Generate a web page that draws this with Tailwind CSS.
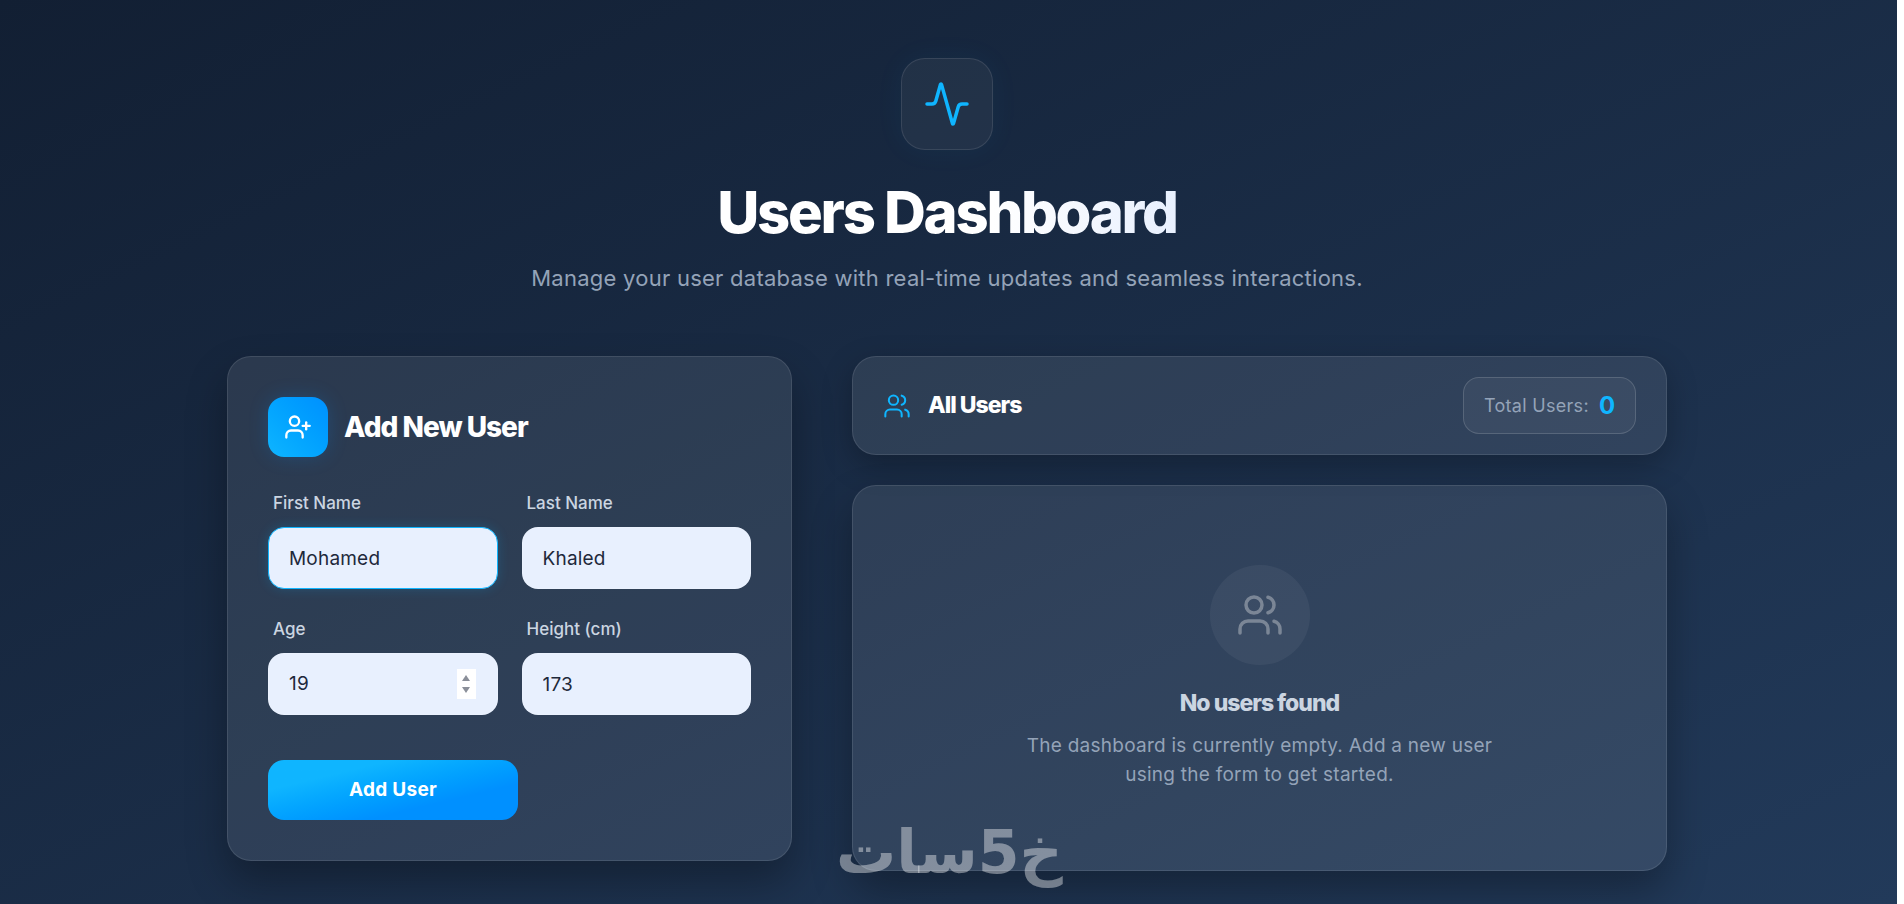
<!DOCTYPE html>
<html lang="en">
  <head>
    <meta charset="UTF-8" />
    <meta name="viewport" content="width=device-width, initial-scale=1.0" />
    <title>Users Dashboard</title>
    <script src="https://cdn.jsdelivr.net/npm/@tailwindcss/browser@4"></script>
  </head>
  <body class="flex h-[904px] overflow-hidden bg-white font-['Inter',sans-serif]">
    <div class="relative flex-1 bg-linear-to-br from-[#121f33] to-[#223a5a] pt-[58px]">
      <!-- Header -->
      <header class="flex flex-col items-center pr-[3px]">
        <div class="flex h-[92px] w-[92px] items-center justify-center rounded-3xl border border-white/10 bg-white/5 shadow-[0_0_30px_rgba(15,181,255,0.05)]">
          <svg class="h-12 w-12 text-[#0fb5ff]" xmlns="http://www.w3.org/2000/svg" fill="none" viewBox="0 0 24 24" stroke="currentColor" stroke-width="1.75" stroke-linecap="round" stroke-linejoin="round">
            <path d="M22 12h-2.48a2 2 0 0 0-1.93 1.46l-2.35 8.36a.25.25 0 0 1-.48 0L9.24 2.18a.25.25 0 0 0-.48 0l-2.35 8.36A2 2 0 0 1 4.49 12H2" />
          </svg>
        </div>
        <h1 class="mt-[26px] bg-linear-to-r from-white from-60% to-[#e8f0fe] bg-clip-text text-[58px] leading-[72px] font-extrabold tracking-[-2.3px] text-transparent">Users Dashboard</h1>
        <p class="mt-[15px] text-[22px] leading-[30px] tracking-[0.25px] text-[#94a3b8]">Manage your user database with real-time updates and seamless interactions.</p>
      </header>

      <main class="mt-[63px] ml-[227px] grid w-[1440px] grid-cols-[565px_815px] gap-[60px]">
        <!-- Add user form -->
        <section class="h-[505px] rounded-3xl border border-white/10 bg-white/[0.09] p-10 shadow-[0_20px_40px_rgba(0,0,0,0.3)]">
          <div class="flex items-center gap-4">
            <div class="flex h-[60px] w-[60px] items-center justify-center rounded-2xl bg-linear-to-tr from-[#0fb5ff] to-[#0090ff] shadow-[0_0_20px_rgba(15,144,255,0.2)]">
              <svg class="h-7 w-7 text-white" xmlns="http://www.w3.org/2000/svg" fill="none" viewBox="0 0 24 24" stroke="currentColor" stroke-width="2" stroke-linecap="round" stroke-linejoin="round">
                <path d="M16 21v-2a4 4 0 0 0-4-4H6a4 4 0 0 0-4 4v2" />
                <circle cx="9" cy="7" r="4" />
                <path d="M19 8v6" />
                <path d="M22 11h-6" />
              </svg>
            </div>
            <h2 class="text-[28px] font-extrabold tracking-[-1px] text-white">Add New User</h2>
          </div>
          <form class="mt-[34px] grid grid-cols-2 gap-x-6 gap-y-[28px]">
            <div>
              <label class="block pl-[5px] text-[17px] leading-6 font-medium text-[#cbd5e1]">First Name</label>
              <input type="text" value="Mohamed" class="mt-3 h-[62px] w-full rounded-2xl border border-[#0fb5ff] bg-[#e8f0fe] px-5 text-[19px] tracking-[0.2px] text-[#1e293b] shadow-[0_0_12px_rgba(15,181,255,0.2)] outline-none" />
            </div>
            <div>
              <label class="block pl-[5px] text-[17px] leading-6 font-medium text-[#cbd5e1]">Last Name</label>
              <input type="text" value="Khaled" class="mt-3 h-[62px] w-full rounded-2xl border border-white/15 bg-[#e8f0fe] px-5 text-[19px] tracking-[0.2px] text-[#1e293b] outline-none" />
            </div>
            <div>
              <label class="block pl-[5px] text-[17px] leading-6 font-medium text-[#cbd5e1]">Age</label>
              <div class="relative mt-3 flex h-[62px] w-full items-center rounded-2xl border border-white/15 bg-[#e8f0fe] px-5 text-[19px] tracking-[0.2px] text-[#1e293b]">
                19
                <span class="absolute top-[15px] right-[21px] flex h-[30px] w-[19px] flex-col items-center justify-center gap-[6px] bg-white">
                  <svg class="h-[6px] w-[8px] text-[#8a8f99]" viewBox="0 0 8 6" fill="currentColor"><path d="M4 0 8 6H0z" /></svg>
                  <svg class="h-[6px] w-[8px] text-[#8a8f99]" viewBox="0 0 8 6" fill="currentColor"><path d="M0 0h8L4 6z" /></svg>
                </span>
              </div>
            </div>
            <div>
              <label class="block pl-[5px] text-[17px] leading-6 font-medium text-[#cbd5e1]">Height (cm)</label>
              <input type="text" value="173" class="mt-3 h-[62px] w-full rounded-2xl border border-white/15 bg-[#e8f0fe] px-5 text-[19px] tracking-[0.2px] text-[#1e293b] outline-none" />
            </div>
          </form>
          <button class="mt-[45px] h-[60px] w-[250px] rounded-2xl bg-linear-to-br from-[#0fb5ff] from-25% to-[#0090ff] to-70% text-[19px] font-bold tracking-[0.3px] text-white">Add User</button>
        </section>

        <!-- Users list -->
        <section class="flex flex-col gap-[30px]">
          <div class="flex h-[99px] items-center justify-between rounded-3xl border border-white/10 bg-white/[0.09] pr-[30px] pl-[30px] shadow-[0_10px_30px_rgba(0,0,0,0.25)]">
            <div class="flex items-center gap-[17px]">
              <svg class="h-7 w-7 text-[#0fb5ff]" xmlns="http://www.w3.org/2000/svg" fill="none" viewBox="0 0 24 24" stroke="currentColor" stroke-width="1.75" stroke-linecap="round" stroke-linejoin="round">
                <path d="M16 21v-2a4 4 0 0 0-4-4H6a4 4 0 0 0-4 4v2" />
                <circle cx="9" cy="7" r="4" />
                <path d="M22 21v-2a4 4 0 0 0-3-3.87" />
                <path d="M16 3.13a4 4 0 0 1 0 7.75" />
              </svg>
              <h2 class="text-[23px] font-extrabold tracking-[-1px] text-white">All Users</h2>
            </div>
            <div class="flex h-[57px] w-[173px] items-center justify-center gap-[10px] rounded-2xl border border-white/15 bg-white/5">
              <span class="text-lg tracking-[0.3px] text-[#94a3b8]">Total Users:</span>
              <span class="text-[24px] font-bold text-[#0fb5ff]">0</span>
            </div>
          </div>
          <div class="flex h-[386px] flex-col items-center rounded-3xl border border-white/10 bg-white/[0.09] pt-[79px] shadow-[0_20px_40px_rgba(0,0,0,0.3)]">
            <div class="flex h-[100px] w-[100px] items-center justify-center rounded-full bg-white/5">
              <svg class="h-12 w-12 text-[#7b8696]" xmlns="http://www.w3.org/2000/svg" fill="none" viewBox="0 0 24 24" stroke="currentColor" stroke-width="1.75" stroke-linecap="round" stroke-linejoin="round">
                <path d="M16 21v-2a4 4 0 0 0-4-4H6a4 4 0 0 0-4 4v2" />
                <circle cx="9" cy="7" r="4" />
                <path d="M22 21v-2a4 4 0 0 0-3-3.87" />
                <path d="M16 3.13a4 4 0 0 1 0 7.75" />
              </svg>
            </div>
            <h3 class="mt-[21px] text-[23px] font-extrabold tracking-[-1px] text-[#cbd5e1]">No users found</h3>
            <p class="mt-[10px] w-[500px] text-center text-[19px] leading-[29px] tracking-[0.25px] text-[#94a3b8]">The dashboard is currently empty. Add a new user using the form to get started.</p>
          </div>
        </section>
      </main>
      <!-- Site watermark -->
      <div class="absolute top-[822px] left-[836px] font-['DejaVu_Sans',sans-serif] text-[60px] leading-[60px] font-bold text-white/40" dir="rtl">خ5سات</div>
    </div>
    <div class="w-[7px]"></div>
  </body>
</html>
